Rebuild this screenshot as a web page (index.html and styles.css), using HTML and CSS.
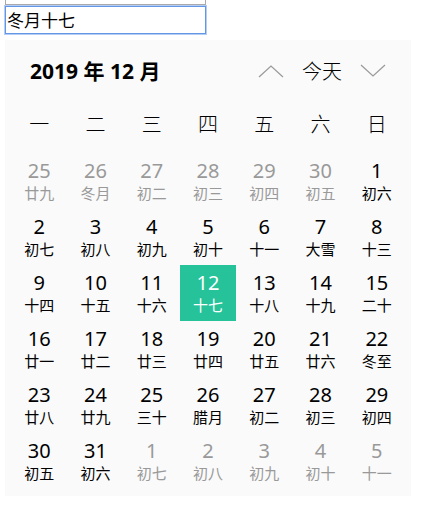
FILE: index.html
```
<!DOCTYPE html>
<html lang="zh-CN">
<head>
<meta charset="utf-8">
<title>日历</title>
<link rel="stylesheet" href="styles.css">
</head>
<body>
<form class="fields">
  <input class="field field-previous" type="text" aria-label="公历日期">
  <input class="field field-active" type="text" aria-label="农历日期" value="冬月十七">
</form>
<section class="calendar">
  <header class="toolbar">
    <h1 class="title">2019 年 12 月</h1>
    <nav class="controls">
      <button class="arrow" type="button" aria-label="上个月"><svg width="26" height="14" viewBox="0 0 26 14"><path d="M1 13 13 2 25 13"/></svg></button>
      <button class="today" type="button">今天</button>
      <button class="arrow" type="button" aria-label="下个月"><svg width="26" height="14" viewBox="0 0 26 14"><path d="M1 1 13 12 25 1"/></svg></button>
    </nav>
  </header>
  <table class="month">
    <thead>
      <tr><th>一</th><th>二</th><th>三</th><th>四</th><th>五</th><th>六</th><th>日</th></tr>
    </thead>
    <tbody id="days"></tbody>
  </table>
</section>
<script src="calendar.js"></script>
</body>
</html>
```
FILE: styles.css
```
* {
  box-sizing: border-box;
}

body {
  margin: 0;
  padding: 0 22px 0 5px;
  background: #fff;
  color: #000;
  font-family: "Noto Sans", "Noto Sans CJK SC", sans-serif;
}

button {
  padding: 0;
  border: 0;
  background: none;
  color: inherit;
  font: inherit;
}

.fields {
  display: flex;
  flex-direction: column;
  align-items: flex-start;
  gap: 1px;
  margin-top: -23px;
}

.field {
  width: 201px;
  height: 28px;
  padding: 0 1px 2px;
  border: 1px solid #a9a9a9;
  outline: 0;
  font-family: "Noto Sans CJK SC", sans-serif;
  font-size: 17px;
  font-weight: 400;
}

.field-active {
  border-color: #6496e6;
  box-shadow: 0 0 0 1px #b4cdf5;
}

.calendar {
  margin-top: 6px;
  padding: 0 6px 7px;
  background: #fafafa;
}

.toolbar {
  display: flex;
  align-items: center;
  justify-content: space-between;
  height: 62px;
  padding: 0 19px;
}

.title {
  margin: 0;
  font-size: 21px;
  line-height: 28px;
  font-weight: 700;
}

.controls {
  display: flex;
  align-items: center;
  gap: 18px;
  font-family: "Noto Sans CJK SC", sans-serif;
  font-size: 20px;
  line-height: 28px;
  font-weight: 300;
}

.arrow {
  display: flex;
}

.arrow path {
  fill: none;
  stroke: #999;
  stroke-width: 1.2;
}

.month {
  width: 100%;
  border-collapse: collapse;
  table-layout: fixed;
}

.month th {
  height: 51px;
  padding: 0 0 8px;
  font-family: "Noto Sans CJK SC", sans-serif;
  font-size: 20px;
  font-weight: 300;
  line-height: 28px;
}

.month td {
  padding: 0;
}

.day {
  display: flex;
  flex-direction: column;
  align-items: center;
  justify-content: center;
  width: 100%;
  height: 56px;
  padding-bottom: 2px;
}

.number {
  font-size: 20px;
  line-height: 24px;
}

.lunar {
  font-family: "Noto Sans CJK SC", sans-serif;
  font-size: 15px;
  font-weight: 400;
  line-height: 19px;
}

.outside {
  color: #999;
}

.selected {
  background: #26c29a;
  color: #fff;
}
```
FILE: calendar.js
```
const lunarWeeks = [
  "廿九 冬月 初二 初三 初四 初五 初六",
  "初七 初八 初九 初十 十一 大雪 十三",
  "十四 十五 十六 十七 十八 十九 二十",
  "廿一 廿二 廿三 廿四 廿五 廿六 冬至",
  "廿八 廿九 三十 腊月 初二 初三 初四",
  "初五 初六 初七 初八 初九 初十 十一"
];
const body = document.getElementById("days");

lunarWeeks.forEach((week, row) => {
  const tr = body.insertRow();
  week.split(" ").forEach((lunar, column) => {
    const date = new Date(2019, 10, 25 + row * 7 + column);
    const inMonth = date.getMonth() === 11;
    const day = document.createElement("button");
    day.type = "button";
    day.className = "day";
    if (!inMonth) day.classList.add("outside");
    if (inMonth && date.getDate() === 12) day.classList.add("selected");
    day.innerHTML = `<span class="number">${date.getDate()}</span><span class="lunar">${lunar}</span>`;
    tr.insertCell().append(day);
  });
});
```
